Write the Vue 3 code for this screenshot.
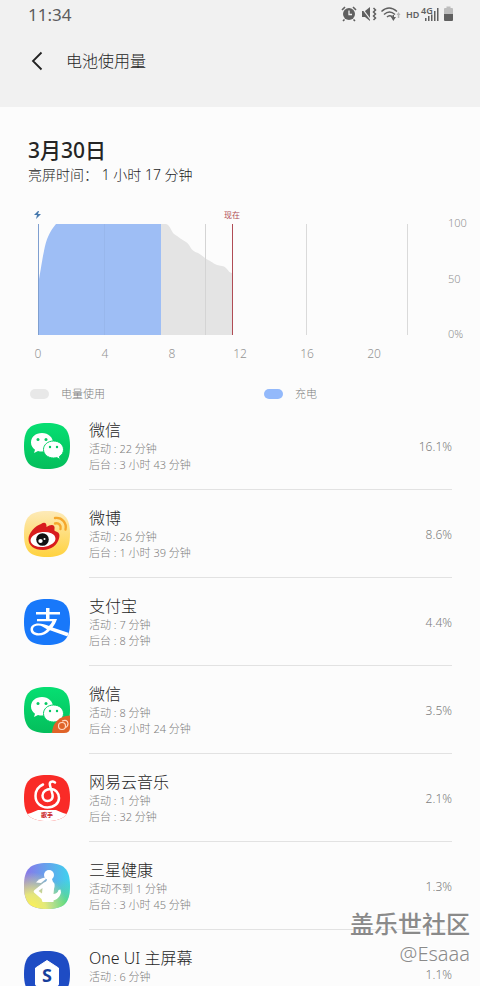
<script setup>
const hours = [
  { x: 38, label: '0' },
  { x: 105, label: '4' },
  { x: 172, label: '8' },
  { x: 240, label: '12' },
  { x: 307, label: '16' },
  { x: 374, label: '20' }
]

const levels = [
  { y: 27, label: '100' },
  { y: 83, label: '50' },
  { y: 138, label: '0%' }
]

const apps = [
  { id: 1, icon: 'wechat', name: '微信', usage: ['活动 : 22 分钟', '后台 : 3 小时 43 分钟'], percent: '16.1%' },
  { id: 2, icon: 'weibo', name: '微博', usage: ['活动 : 26 分钟', '后台 : 1 小时 39 分钟'], percent: '8.6%' },
  { id: 3, icon: 'alipay', name: '支付宝', usage: ['活动 : 7 分钟', '后台 : 8 分钟'], percent: '4.4%' },
  { id: 4, icon: 'wechat', dual: true, name: '微信', usage: ['活动 : 8 分钟', '后台 : 3 小时 24 分钟'], percent: '3.5%' },
  { id: 5, icon: 'netease', name: '网易云音乐', usage: ['活动 : 1 分钟', '后台 : 32 分钟'], percent: '2.1%' },
  { id: 6, icon: 'health', name: '三星健康', usage: ['活动不到 1 分钟', '后台 : 3 小时 45 分钟'], percent: '1.3%' },
  { id: 7, icon: 'oneui', name: 'One UI 主屏幕', usage: ['活动 : 6 分钟'], percent: '1.1%' }
]
</script>

<template>
  <div class="page">
    <header class="top">
      <div class="status-bar">
        <span class="clock">11:34</span>
        <svg class="status-icons" width="114" height="18" viewBox="0 0 114 18" fill="#606060">
          <!-- 闹钟 -->
          <circle cx="8" cy="9" r="6" />
          <path d="M1 5l3-3M15 5l-3-3M3.500 14.500l-1.500 1.500M12.500 14.500l1.500 1.500" stroke="#606060" stroke-width="1.600" />
          <path d="M8 5.500V9.500H11" fill="none" stroke="#f1f1f1" stroke-width="1.300" />
          <!-- 振动静音 -->
          <path d="M21 6h3l5-4v14l-5-4h-3z" />
          <path d="M20.500 2.500l9 12" stroke="#f1f1f1" stroke-width="1.200" />
          <path d="M32.500 3l2 2-2 2 2 2-2 2 2 2-2 2" fill="none" stroke="#606060" stroke-width="1.500" />
          <!-- Wi-Fi -->
          <g fill="none" stroke="#606060" stroke-width="1.500">
            <path d="M40.500 6.500Q48 -.5 56 6.500" />
            <path d="M43 9.500Q48.500 4.500 54 9.500" />
            <path d="M46 12Q48.500 9.500 51.500 12" />
          </g>
          <path d="M50 12h1.500v-2h1.500v2h2l-2.700 4z" />
          <path d="M55.500 10l2-3 2 3h-1.200v3h-1.500v-3z" fill="#b5b5b5" />
          <text x="65" y="13" font-size="9" font-weight="600">HD</text>
          <text x="80" y="9" font-size="9" font-weight="600">4G</text>
          <path d="M84 13h1.500v3H84zM87 11h1.500v5H87zM90 9.500h1.500V16H90zM93 6h1.500v10H93zM96 3h1.500v13H96z" />
          <!-- 电池 -->
          <path d="M103 4q0-1 1-1h1.500V1.500h4V3h1.500q1 0 1 1v6h-9z" fill="#bdbdbd" />
          <path d="M103 9h9v6q0 1-1 1h-7q-1 0-1-1z" />
        </svg>
      </div>
      <div class="title-bar">
        <button class="back-btn" aria-label="返回">
          <svg width="12" height="20" viewBox="0 0 12 20" fill="none" stroke="#222" stroke-width="1.800">
            <path d="M10.500 1.500L2 10l8.500 8.500" />
          </svg>
        </button>
        <h1>电池使用量</h1>
      </div>
    </header>

    <main>
      <section class="summary">
        <h2>3月30日</h2>
        <p>亮屏时间： 1 小时 17 分钟</p>
      </section>

      <svg class="chart" viewBox="0 0 480 164" role="img">
        <path d="M306.500 24V135M407.500 24V135" stroke="#dadada" />
        <path d="M161 24H166C170 25 171 31 174 34C179 37 182 40 186 42C191 45 190 51 198 53C202 55 204 58 208 60C213 62 214 65 222 66C228 67 227 72 232 73V135H161Z" fill="#e4e4e4" />
        <path d="M38 135V84C40 75 42 60 44 51C46 39 50 31 56 24H161V135Z" fill="#9ebef5" />
        <path d="M104.500 24V135" stroke="#98b7ec" />
        <path d="M205.500 24V135" stroke="#d4d4d4" />
        <path d="M38.500 24V135" stroke="#7f9fd0" />
        <path d="M232.500 24V135" stroke="#b04c55" />
        <path d="M38 11l-4 4h3l-1 4 5-5h-3l1-3z" fill="#4779ad" />
        <text class="now" x="232" y="18">现在</text>
        <text v-for="h in hours" :key="h.x" class="hour" :x="h.x" y="158">{{ h.label }}</text>
        <text v-for="l in levels" :key="l.y" class="level" x="448" :y="l.y">{{ l.label }}</text>
      </svg>

      <div class="legend">
        <span class="legend-item"><i class="dot usage"></i>电量使用</span>
        <span class="legend-item"><i class="dot charge"></i>充电</span>
      </div>

      <ul class="app-list">
        <li v-for="app in apps" :key="app.id" class="app">
          <svg class="app-icon" viewBox="0 0 46 46">
            <defs>
              <clipPath :id="'clip' + app.id">
                <path d="M23 0C40 0 46 6 46 23S40 46 23 46 0 40 0 23 6 0 23 0Z" />
              </clipPath>
              <linearGradient id="greenFill" x1="0" y1="0" x2="0" y2="1">
                <stop offset="0" stop-color="#06df72" />
                <stop offset="1" stop-color="#04be5b" />
              </linearGradient>
              <linearGradient id="yellowFill" x1="0" y1="0" x2="0" y2="1">
                <stop offset="0" stop-color="#fdeab8" />
                <stop offset="1" stop-color="#ffd23e" />
              </linearGradient>
              <linearGradient id="healthFill" x1="0" y1="0" x2="1" y2="0">
                <stop offset="0" stop-color="#8a74ea" />
                <stop offset="1" stop-color="#3fd2ee" />
              </linearGradient>
              <radialGradient id="healthGlow" cx="0.15" cy="1" r="0.8">
                <stop offset="0" stop-color="#fff34e" />
                <stop offset="0.4" stop-color="#f0f070" stop-opacity="0.9" />
                <stop offset="1" stop-color="#f0f070" stop-opacity="0" />
              </radialGradient>
              <radialGradient id="healthGreen" cx="0.9" cy="0.95" r="0.6">
                <stop offset="0" stop-color="#5fdc6c" />
                <stop offset="1" stop-color="#5fdc8c" stop-opacity="0" />
              </radialGradient>
            </defs>
            <g :clip-path="'url(#clip' + app.id + ')'">
              <template v-if="app.icon === 'wechat'">
                <rect width="46" height="46" fill="url(#greenFill)" />
                <path d="M18 10C11.500 10 7 14 7 19.500c0 3 1.500 5.500 4 7.200L10 30l4-2c1.300.4 2.600.5 4 .5 6.500 0 11-4 11-9S24.500 10 18 10Z" fill="#fff" />
                <path d="M29.500 18c-6 0-10 4-10 8.500S23.500 35 29.500 35c1.200 0 2.300-.1 3.300-.4l3.400 1.900-.8-3C38 32 39.500 29.500 39.500 26.500 39.500 22 35.500 18 29.500 18Z" fill="#fff" stroke="#06cf67" />
                <g fill="#06c963">
                  <circle cx="14" cy="16.500" r="1.500" />
                  <circle cx="22" cy="16.500" r="1.500" />
                  <circle cx="26" cy="24" r="1.200" />
                  <circle cx="33" cy="24" r="1.200" />
                </g>
              </template>

              <template v-else-if="app.icon === 'weibo'">
                <rect width="46" height="46" fill="url(#yellowFill)" />
                <path d="M17 13c3-2.500 6-1.500 5.500 3 4-3 9-3 8 2-.3 1.500 0 2 1.500 2.500 3.500 1 4 3.500 3 7C33.500 34 27 39 19 39 10 39 4.500 34.500 4.500 28 4.500 22 11 15 17 13Z" fill="#d81d1d" />
                <ellipse cx="19" cy="28.500" rx="12.500" ry="7.500" fill="#fff" transform="rotate(-6 19 28.500)" />
                <circle cx="18.500" cy="28.500" r="6.300" fill="#111" />
                <ellipse cx="16.500" cy="30" rx="2.200" ry="1.900" fill="#fff" />
                <circle cx="20.500" cy="28" r="1" fill="#fff" />
                <g fill="none" stroke="#f5a72c" stroke-width="2.400" stroke-linecap="round">
                  <path d="M31 7c7-1 12 5 10.500 11.500" />
                  <path d="M31 12.500c4-1 6.500 2 5.500 5.500" />
                </g>
              </template>

              <template v-else-if="app.icon === 'alipay'">
                <rect width="46" height="46" fill="#1878fa" />
                <path d="M12 13h10V9h3.500v4H36v2.500H25.500V20H33c-1 3-2.500 6-4.500 8.500L45 34l-1.500 3.500L26 31.200C23 34.500 19 36.500 14.500 36.500 9.500 36.500 6.500 34 6.500 30.500S9.500 24.500 14.500 24.500c3.500 0 7 1.200 10.500 2.500 1.500-1.500 2.500-3 3.300-4.700H13V20h9v-4.500H12Zm2.500 13.500C11 26.500 9 28 9 30.300S11 34.200 14.500 34.200c3.500 0 6-1.500 8.500-4-3-1.500-5.500-3.700-8.500-3.700Z" fill="#fff" />
              </template>

              <template v-else-if="app.icon === 'netease'">
                <rect width="46" height="46" fill="#f92b27" />
                <path d="M0 40Q8 38 14 35H32Q38 38 46 40V46H0z" fill="#fff" />
                <path d="M31 7.500c-3-2-6-.5-5 3l2.500 9c1 5-2.500 6.500-5 6.500-3 0-5-2.500-5-5.500 0-4 4-6.500 8-6.500 5 0 8.500 4 8.500 9 0 5.500-5 9.500-11.500 9.500S11.500 28 11.500 21c0-5 3-9.500 7.500-11.500" fill="none" stroke="#fff" stroke-width="2.500" stroke-linecap="round" />
                <text x="23" y="42" font-size="6" font-weight="700" text-anchor="middle" fill="#c9201c">歌手</text>
              </template>

              <template v-else-if="app.icon === 'health'">
                <rect width="46" height="46" fill="url(#healthFill)" />
                <rect width="46" height="46" fill="url(#healthGreen)" />
                <rect width="46" height="46" fill="url(#healthGlow)" />
                <g fill="#fff">
                  <circle cx="25" cy="12" r="5" />
                  <path d="M21 14.500c-4 .5-7 2.500-9 5l5 .5 5-4z" />
                  <path d="M23 16h5l1 3c2 1 2 4 1 7l-.5 5c2 0 3.500-1 4.500-2.500l.5-1.500 2-.5.500 3c-1 4.500-4 7-7.500 8v1.500H18.500L17.500 36 10 29.500q-1-1.500.5-2.500L20 19.500q3-1 3-3.500ZM14.500 28l3.500 2.500.5-5.500Z" fill-rule="evenodd" />
                </g>
              </template>

              <template v-else>
                <rect width="46" height="46" fill="#1e4cc4" />
                <path d="M23 9.500l11.500 7.500V33q0 2-2 2h-19q-2 0-2-2V17Z" fill="#fff" stroke="#fff" stroke-linejoin="round" />
                <text x="23" y="31" font-size="18" font-weight="700" text-anchor="middle" fill="#173f9c">S</text>
              </template>
            </g>
            <!-- 双开应用角标 -->
            <g v-if="app.dual">
              <path d="M46 28.500C35 29 28.500 36 28 46H40Q46 46 46 41Z" fill="#e06328" />
              <g fill="none" stroke="#ffd9c2" stroke-width="1.200">
                <circle cx="38" cy="39" r="3.500" />
                <path d="M38 34q5.500-2 6 2.500 0 3-2.500 4" />
              </g>
            </g>
          </svg>
          <div class="app-info">
            <div class="app-text">
              <h3>{{ app.name }}</h3>
              <p v-for="line in app.usage" :key="line">{{ line }}</p>
            </div>
            <span class="percent">{{ app.percent }}</span>
          </div>
        </li>
      </ul>
    </main>

    <div class="watermark">
      <strong>盖乐世社区</strong>
      <span>@Esaaa</span>
    </div>
  </div>
</template>

<style>
body {
  margin: 0;
  background: #fcfcfc;
}
</style>

<style scoped>
.page {
  position: relative;
  height: 100vh;
  overflow: hidden;
  background: #fcfcfc;
  color: #252525;
  font-family: 'Noto Sans', 'Noto Sans CJK SC', sans-serif;
  font-weight: 300;
}

h1,
h2,
h3,
p,
ul {
  margin: 0;
  padding: 0;
  font-weight: inherit;
}

.top {
  background: #f1f1f1;
  padding-bottom: 25px;
}

.status-bar {
  display: flex;
  align-items: center;
  justify-content: space-between;
  height: 28px;
  padding: 0 25px 0 28px;
}

.clock {
  font-size: 17px;
  font-weight: 400;
  color: #5c5c5c;
}

.title-bar {
  display: flex;
  align-items: center;
  gap: 23px;
  height: 54px;
  padding: 12px 28px 0 31px;
  box-sizing: border-box;
}

.back-btn {
  display: flex;
  padding: 0;
  border: none;
  background: none;
  cursor: pointer;
}

.title-bar h1 {
  font-size: 16px;
  line-height: 24px;
}

.summary {
  padding: 29px 28px 0;
}

.summary h2 {
  font-size: 21px;
  line-height: 28px;
  font-weight: 500;
}

.summary p {
  font-size: 14px;
  line-height: 22px;
}

/* 电量图表 */
.chart {
  display: block;
  width: 100%;
  margin-top: 14px;
}

.hour,
.level {
  font-size: 12px;
  fill: #949494;
}

.hour {
  text-anchor: middle;
}

.level {
  font-size: 11px;
}

.now {
  font-size: 8px;
  font-weight: 400;
  fill: #b04c55;
  text-anchor: middle;
}

.legend {
  display: grid;
  grid-template-columns: 234px 1fr;
  margin-top: 22px;
  padding: 0 30px;
  font-size: 11px;
  line-height: 16px;
  color: #7c7c7c;
}

.legend-item {
  display: flex;
  align-items: center;
  gap: 12px;
}

.dot {
  width: 19px;
  height: 10px;
  border-radius: 5px;
}

.usage {
  background: #e8e8e8;
}

.charge {
  background: #93b9fb;
}

/* 应用列表 */
.app-list {
  list-style: none;
}

.app {
  display: flex;
  align-items: center;
  gap: 19px;
  padding: 0 28px 0 24px;
}

.app-icon {
  width: 46px;
  height: 46px;
  flex-shrink: 0;
}

.app-info {
  display: flex;
  flex: 1;
  align-items: center;
  justify-content: space-between;
  padding: 17px 0 16px;
  border-bottom: 1px solid #e2e2e2;
}

.app-text {
  min-height: 54px;
}

.app-text h3 {
  font-size: 16px;
  line-height: 22px;
}

.app-text p {
  font-size: 11px;
  line-height: 16px;
  color: #7c7c7c;
}

.percent {
  font-size: 12px;
  color: #7c7c7c;
}

/* 水印 */
.watermark {
  position: absolute;
  right: 10px;
  bottom: 18px;
  display: flex;
  flex-direction: column;
  align-items: flex-end;
  color: #8a8a8a;
  text-shadow: 0 -1px 1px #fff;
}

.watermark strong {
  font-size: 24px;
  font-weight: 500;
  line-height: 32px;
}

.watermark span {
  font-size: 20px;
  line-height: 28px;
}
</style>
